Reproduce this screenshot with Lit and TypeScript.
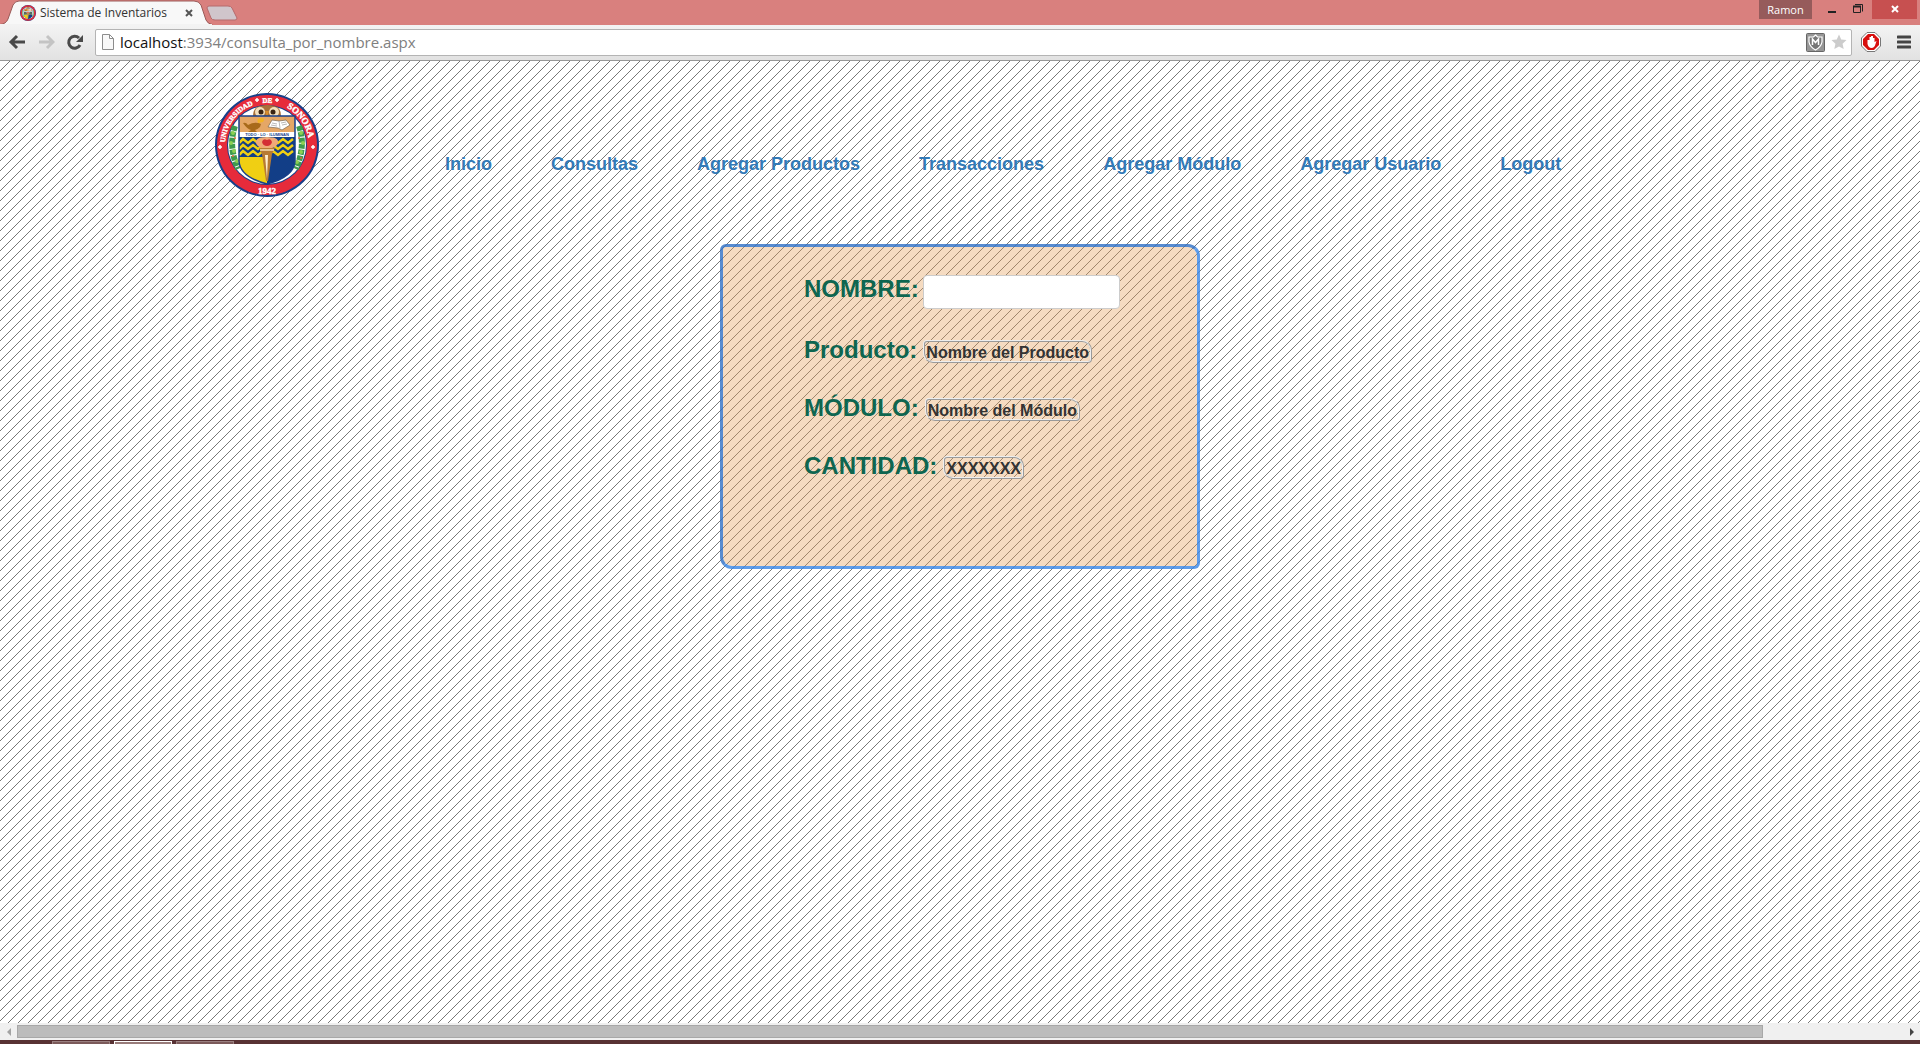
import { LitElement, html, css, svg, nothing } from "lit";
import { customElement } from "lit/decorators.js";

const seal = (lettering: boolean) => svg`
  <circle cx="52" cy="52" r="52" fill="#173f8a"/>
  <circle cx="52" cy="52" r="50" fill="#e62b3b"/>
  <circle cx="52" cy="52" r="40" fill="#173f8a"/>
  <circle cx="52" cy="52" r="39" fill="#fff"/>
  <g fill="none" stroke="#3f9a4e" stroke-width="6" stroke-dasharray="5 1">
    <path d="M20 33Q13 53 23 76"/><path d="M84 33Q91 53 81 76"/>
  </g>
  <g fill="#8ccf52"><circle cx="18" cy="40" r="2"/><circle cx="16" cy="50" r="2"/><circle cx="19" cy="58" r="2"/><circle cx="22" cy="68" r="2"/><circle cx="86" cy="40" r="2"/><circle cx="88" cy="50" r="2"/><circle cx="86" cy="59" r="2"/><circle cx="82" cy="69" r="2"/></g>
  <g fill="#e06a3a"><circle cx="20" cy="45" r="1"/><circle cx="18" cy="63" r="1"/><circle cx="84" cy="45" r="1"/><circle cx="86" cy="65" r="1"/></g>
  <path d="M38 23Q38 14 46 13Q52 11 59 13Q66 14 66 23Z" fill="#a9713a"/>
  <circle cx="45" cy="19" r="5" fill="#f3dfbb"/><circle cx="59" cy="19" r="5" fill="#f3dfbb"/>
  <circle cx="46" cy="19" r="2.500" fill="#3a2413"/><circle cx="58" cy="19" r="2.500" fill="#3a2413"/>
  <path d="M50 18h4l-2 6z" fill="#d98d2b"/>
  <clipPath id="shield"><path d="M24 23H80V68Q79 84 52 91Q25 84 24 68Z"/></clipPath>
  <g clip-path="url(#shield)">
    <path d="M24 23H80V39H24Z" fill="#e5a766"/>
    <path d="M24 39H80V44H24Z" fill="#fff"/>
    <path d="M24 44H80V64H24Z" fill="#123e87"/>
    <path d="M24 64H52V92H24Z" fill="#f0cf13"/>
    <path d="M52 64H80V92H52Z" fill="#123e87"/>
    <path d="M24 50l4-4 5 4 5-4 5 4 5-4 5 4 5-4 5 4 5-4 5 4 5-4M24 56l4-4 5 4 5-4 5 4 5-4 5 4 5-4 5 4 5-4 5 4 5-4M24 62l4-4 5 4 5-4 5 4 5-4 5 4 5-4 5 4 5-4 5 4 5-4" fill="none" stroke="#f0cf13" stroke-width="2.500"/>
  </g>
  <path d="M24 23H80V68Q79 84 52 91Q25 84 24 68Z" fill="none" stroke="#173f8a" stroke-width="1.500"/>
  <path d="M28 30q3-1 5 2q7-4 13-1l-1 3q-3 3-5 3l2 2H33l3-2q-4-1-8-7z" fill="#a86a1a"/>
  <path d="M43 30q-2-5 3-5q5 0 2 4z" fill="#f2b325"/>
  <path d="M53 34l4-7 7 1 7-1 4 5-8 5-4-2z" fill="#fff" stroke="#776551" stroke-width=".7"/>
  <path d="M64 28l1 7M57 30l5 1M56 32l6 1M66 30l5-1M67 32l5-1" stroke="#999" stroke-width=".7"/>
  <path d="M41 50Q40 44 52 44Q64 44 63 50Q62 55 52 56Q42 55 41 50Z" fill="#efaa78"/>
  <path d="M47 49q1-4 5-2q4-2 5 2q-1 4-5 4t-5-4z" fill="#d42d35"/>
  <path d="M44 55H60L57 61 53 88H51L47 61Z" fill="#b77b34"/><path d="M50 62h3l-1 24z" fill="#fff0ce"/>
  <path d="M45 57h14" stroke="#f7deb0" stroke-width="1.500"/>
  ${lettering ? svg`
  <path id="rim" d="M13.700 69A42 42 0 1 1 90.300 69" fill="none"/>
  <g font-family="Liberation Serif, serif" font-weight="700" fill="#fff" stroke="#fff" stroke-width=".4">
    <text font-size="7"><textPath href="#rim" startOffset="20">UNIVERSIDAD</textPath></text>
    <text font-size="7"><textPath href="#rim" startOffset="79">DE</textPath></text>
    <text font-size="9"><textPath href="#rim" startOffset="104">SONORA</textPath></text>
    <text x="52" y="101" font-size="9" text-anchor="middle">1942</text>
  </g>
  <text x="52" y="43" font-size="4" text-anchor="middle" fill="#173f8a" font-weight="700" font-family="Liberation Sans, sans-serif">TODO · LO · ILUMINAN</text>
  <path d="M5 52v4M3 54h4M42 5v4M40 7h4M62 5v4M60 7h4M98 52v4M96 54h4" stroke="#fff" stroke-width="1.500"/>` : nothing}`;

@customElement("browser-bar")
class BrowserBar extends LitElement {
  static styles = css`
    :host { display: block; font-family: "Open Sans", "Liberation Sans", sans-serif; font-weight: 400; }
    .tabs { display: flex; height: 25px; background: #d9807e; justify-content: space-between; }
    .shape { display: grid; width: 240px; height: 25px; }
    .shape svg, .tab { grid-area: 1 / 1; }
    .tab { display: flex; align-items: center; gap: 4px; padding-left: 20px; font-size: 12px; color: #333; }
    .title { width: 136px; white-space: nowrap; }
    button { border: 0; padding: 0; background: none; display: flex; align-items: center; justify-content: center; }
    .win { display: flex; align-items: flex-start; }
    .user { width: 53px; height: 19px; background: #965b5b; color: #fff; font: 11px "Open Sans", sans-serif; margin-right: 8px; }
    .win .w { width: 26px; height: 19px; }
    .win .close { width: 45px; background: #c75050; margin-right: 3px; }
    .tools { display: flex; align-items: center; height: 36px; box-sizing: border-box; border-bottom: 1px solid #999; background: linear-gradient(#f3f3f3, #e2e2e2); padding: 0 7px 1px 8px; }
    .nav { width: 29px; height: 24px; justify-content: flex-start; }
    .addr { flex: 1; display: flex; align-items: center; height: 25px; border: 1px solid #b4b4b4; border-radius: 2px; background: #fff; padding: 0 4px 0 6px; gap: 6px; }
    .url { flex: 1; font-size: 15px; line-height: 22px; color: #808080; }
    .url b { font-weight: 400; color: #111; }
    .ext { width: 20px; height: 20px; margin-left: 9px; }
    .menu { width: 14px; height: 20px; margin-left: 16px; margin-right: 2px; }
  `;
  render() {
    return html`
      <div class="tabs">
        <div class="shape">
          <svg width="240" height="25" aria-hidden="true">
            <path d="M0 24.500Q6 24 8 19L13 5Q15 1 19 1H194Q199 1 201 5L206 20Q208 24 212 24.500V25H0Z" fill="#f8f8f8" stroke="#9a5a58"/>
            <path d="M0 24h212v1H0z" fill="#f3f3f3"/>
            <path d="M207 8Q207 6 209 6H228Q231 6 232 8L237 18Q237 20 235 20H215Q212 20 211 18Z" fill="#d0c5cb" stroke="#b56a6c"/>
          </svg>
          <div class="tab">
            <svg width="16" height="16" viewBox="0 0 104 104" aria-hidden="true">${seal(false)}</svg>
            <span class="title">Sistema de Inventarios</span>
            <button aria-label="Cerrar pestaña"><svg width="16" height="12"><path d="M6 3l6 6M12 3l-6 6" stroke="#555" stroke-width="2"/></svg></button>
          </div>
        </div>
        <div class="win">
          <button class="user">Ramon</button>
          <button class="w" aria-label="Minimizar"><svg width="20" height="19"><path d="M5 12h8" stroke="#222" stroke-width="2"/></svg></button>
          <button class="w" aria-label="Restaurar"><svg width="20" height="19"><path d="M4.500 6.500h7v6h-7zM6 4.500h7.500v7" fill="none" stroke="#222"/><path d="M4 6.500h8" stroke="#222" stroke-width="2"/></svg></button>
          <button class="w close" aria-label="Cerrar"><svg width="20" height="19"><path d="M7 6l6 6M13 6l-6 6" stroke="#fff" stroke-width="2"/></svg></button>
        </div>
      </div>
      <div class="tools">
        <button class="nav" aria-label="Atrás"><svg width="18" height="16"><path d="M17 8H4M9 2L3 8l6 6" fill="none" stroke="#4a4a4a" stroke-width="3"/></svg></button>
        <button class="nav" aria-label="Adelante"><svg width="18" height="16"><path d="M2 8h13M10 2l6 6-6 6" fill="none" stroke="#c4c4c4" stroke-width="3"/></svg></button>
        <button class="nav" aria-label="Recargar"><svg width="18" height="18"><path d="M14 12A6 6 0 1 1 13 5" fill="none" stroke="#4a4a4a" stroke-width="3"/><path d="M17 2v7h-7z" fill="#4a4a4a"/></svg></button>
        <div class="addr">
          <svg width="12" height="16" aria-hidden="true"><path d="M.5.500h7l4 4v11H.500zM7.500.500v4h4" fill="#f8f8f8" stroke="#8c8c8c"/></svg>
          <span class="url"><b>localhost</b>:3934/consulta_por_nombre.aspx</span>
          <svg width="19" height="19" aria-hidden="true"><rect x=".5" y=".5" width="18" height="18" rx="1" fill="#969696" stroke="#666"/><path d="M9.500 2l2 2H16v5q-1 5-6.500 8Q4 14 3 9V4h4.500z" fill="#777" stroke="#fff" stroke-width="1.200"/><path d="M6.500 12V6l3 3.500 3-3.500v6" fill="none" stroke="#fff" stroke-width="1.500"/></svg>
          <svg width="16" height="16" viewBox="0 0 18 18" aria-hidden="true"><path d="M9 0.500l2.500 5.700 6 .6-4.500 4.100 1.300 6.100L9 14l-5.300 3 1.300-6.100L.500 6.800l6-.6z" fill="#ccc"/></svg>
        </div>
        <button class="ext" aria-label="Bloqueador"><svg width="20" height="20"><path d="M6 .5h8l5.500 5.500v8L14 19.500H6L.500 14V6z" fill="#fff" stroke="#777"/><path d="M7 2h6l5 5v6l-5 5H7l-5-5V7z" fill="#d8100f"/><path d="M6.500 8v4q1 4 4 4 3 0 4-4l1-3-2 1V6h-1.500v3V4H10v5V5H8.500v5V8z" fill="#fff"/></svg></button>
        <button class="menu" aria-label="Menú"><svg width="14" height="14"><path d="M1 2h12M1 7h12M1 12h12" stroke="#444" stroke-width="3" stroke-linecap="round"/></svg></button>
      </div>`;
  }
}

@customElement("app-root")
class AppRoot extends LitElement {
  static styles = css`
    :host { display: flex; flex-direction: column; min-height: 100vh; font-family: "Arial Rounded MT Bold", "Liberation Sans", sans-serif; font-weight: 700; overflow: hidden; }
    .page { flex: 1; display: grid; }
    .hatch { grid-area: 1 / 1; width: 100%; height: 100%; display: block; }
    .content { grid-area: 1 / 1; }
    header { display: flex; align-items: flex-start; padding: 32px 0 0 215px; }
    nav { display: flex; gap: 59px; padding: 60px 0 0 126px; font-size: 18px; line-height: 22px; }
    a { color: #337ab7; text-decoration: none; white-space: nowrap; }
    .panel { box-sizing: border-box; width: 480px; height: 325px; margin: 47px auto 0; border: 3px solid; border-color: rgba(46, 111, 197, 0.8) rgba(54, 133, 230, 0.8) rgba(54, 133, 230, 0.8) rgba(46, 111, 197, 0.8); border-radius: 6px 12px 6px 12px; background: rgba(229, 160, 92, 0.38); background-clip: padding-box; padding: 28px 0 0 81px; }
    .row { display: flex; gap: 6px; margin-bottom: 30px; color: #0e6650; font-size: 24px; line-height: 28px; }
    .row.first { gap: 4px; margin-bottom: 27px; height: 34px; }
    input { width: 197px; height: 34px; box-sizing: border-box; border: 1px solid #ccc; border-radius: 4px; background: #fff; padding: 0 8px; font-size: 16px; }
    output { box-sizing: border-box; height: 23px; margin-top: 4px; padding: 0 1px; border: 2px ridge #eee; border-radius: 4px 10px 4px 10px; color: #333; font-size: 16px; line-height: 21px; white-space: nowrap; }
    .scroll { display: flex; align-items: center; height: 17px; background: #f0f0f0; }
    .arrow { width: 17px; display: flex; justify-content: center; }
    .thumb { height: 13px; box-sizing: border-box; border: 1px solid #a8a8a8; background: #bcbcbc; flex: 1746; }
    .rest { flex: 140; }
    .taskbar { height: 4px; background: #583234; display: flex; gap: 4px; padding-left: 52px; }
    .task { width: 58px; height: 3px; margin-top: 1px; box-sizing: border-box; border: 1px solid #9a8080; border-bottom: 0; background: #7b5a5a; }
    .task.on { border-color: #fff; background: #987c7a; }
  `;
  render() {
    const links = ["Inicio", "Consultas", "Agregar Productos", "Transacciones", "Agregar Módulo", "Agregar Usuario", "Logout"];
    return html`
      <browser-bar></browser-bar>
      <div class="page">
        <svg class="hatch" aria-hidden="true" shape-rendering="crispEdges">
          <defs><pattern id="lines" width="10" height="10" patternUnits="userSpaceOnUse">
            <rect width="10" height="10" fill="#fff"/>
            ${Array.from({ length: 10 }, (_, i) => svg`<rect x=${i} y=${9 - i} width="1" height="1" fill="#777"/>`)}
          </pattern></defs>
          <rect width="100%" height="100%" fill="url(#lines)"/>
        </svg>
        <div class="content">
          <header>
            <svg width="104" height="104" viewBox="0 0 104 104" role="img" aria-label="Universidad de Sonora">${seal(true)}</svg>
            <nav>${links.map((t) => html`<a href="#">${t}</a>`)}</nav>
          </header>
          <form class="panel">
            <div class="row first"><label for="nombre">NOMBRE:</label><input id="nombre" type="text"></div>
            <div class="row"><label for="producto">Producto:</label><output id="producto">Nombre del Producto</output></div>
            <div class="row"><label for="modulo">MÓDULO:</label><output id="modulo">Nombre del Módulo</output></div>
            <div class="row"><label for="cantidad">CANTIDAD:</label><output id="cantidad">XXXXXXX</output></div>
          </form>
        </div>
      </div>
      <div class="scroll">
        <span class="arrow"><svg width="6" height="8"><path d="M5 0v8L1 4z" fill="#a3a3a3"/></svg></span>
        <span class="thumb"></span><span class="rest"></span>
        <span class="arrow"><svg width="6" height="8"><path d="M1 0v8l4-4z" fill="#444"/></svg></span>
      </div>
      <div class="taskbar"><span class="task"></span><span class="task on"></span><span class="task"></span></div>`;
  }
}
